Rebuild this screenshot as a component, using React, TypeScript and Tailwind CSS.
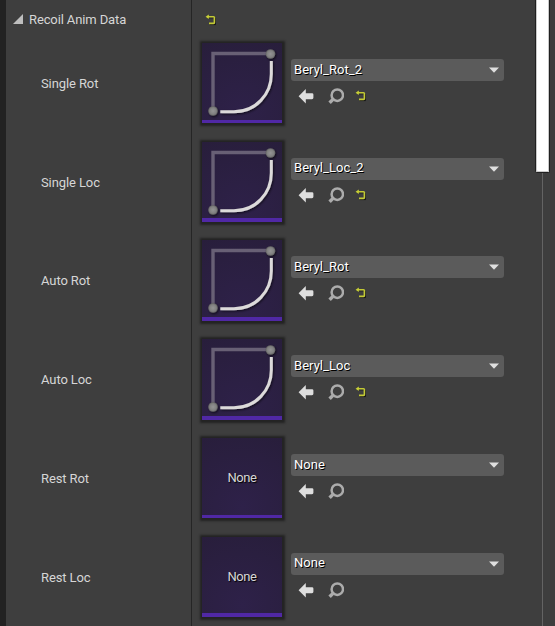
const rows = [
  { label: "Single Rot", value: "Beryl_Rot_2", height: "h-[99px]", tile: "h-20 border-b-[3px]", text: "pb-0", curve: true },
  { label: "Single Loc", value: "Beryl_Loc_2", height: "h-[98px]", tile: "h-20 border-b-4", text: "pb-[2px]", curve: true },
  { label: "Auto Rot", value: "Beryl_Rot", height: "h-[99px]", tile: "h-[81px] border-b-4", text: "pb-0", curve: true },
  { label: "Auto Loc", value: "Beryl_Loc", height: "h-[99px]", tile: "h-[81px] border-b-4", text: "pb-0", curve: true },
  { label: "Rest Rot", value: "None", height: "h-[99px]", tile: "h-20 border-b-[3px]", text: "pb-0", curve: false },
  { label: "Rest Loc", value: "None", height: "h-[99px]", tile: "h-20 border-b-4", text: "pb-[2px]", curve: false },
];

function ResetIcon() {
  return (
    <svg width="12" height="12" viewBox="0 0 12 12" fill="none">
      <path d="M4 3.8H10.8Q11.6 3.8 11.6 4.6V10.6H5.5" stroke="#171717" strokeWidth="1" />
      <path d="M3 2.8H9.6Q10.4 2.8 10.4 3.6V8.6Q10.4 9.4 9.6 9.4H5" stroke="#c3ca35" strokeWidth="1.6" />
      <path d="M1.6 2.8L4.8 .6V5Z" fill="#c9d136" />
    </svg>
  );
}

function ArrowIcon() {
  return (
    <svg width="16" height="16" viewBox="0 0 16 16">
      <path d="M.6 8.2L7.8 1V5.2H14Q15.4 5.2 15.4 6.6V9.8Q15.4 11.2 14 11.2H7.8V15.4Z" fill="#dedede" />
    </svg>
  );
}

function SearchIcon() {
  return (
    <svg width="16" height="16" viewBox="0 0 16 16" fill="none" stroke="#acacac">
      <circle cx="9.3" cy="7.2" r="5.7" strokeWidth="2.5" />
      <path d="M5 11.4L1.6 14.8" strokeWidth="3.4" />
    </svg>
  );
}

function CurveThumb() {
  return (
    <svg width="80" height="80" viewBox="0 0 80 80" fill="none">
      <defs>
        <radialGradient id="knob"><stop offset="0" stopColor="#949494" /><stop offset=".7" stopColor="#808080" /><stop offset="1" stopColor="#606060" /></radialGradient>
        <filter id="soft" x="-20%" y="-20%" width="140%" height="140%"><feDropShadow dx="1" dy="1.2" stdDeviation="1.2" floodColor="#000" floodOpacity=".6" /></filter>
      </defs>
      <path d="M11 64V10.5H65" stroke="#686075" strokeWidth="3.4" />
      <g filter="url(#soft)">
        <path d="M18.3 68.8H32C54 68.8 69.3 51 69.3 31V18" stroke="#dcdada" strokeWidth="3" />
        <circle cx="68.5" cy="11" r="4.8" fill="url(#knob)" />
        <circle cx="11" cy="68" r="4.8" fill="url(#knob)" />
      </g>
    </svg>
  );
}

export default function App() {
  return (
    <div className="flex h-[626px] w-[555px] overflow-hidden bg-[#3e3e3e] font-[Roboto,sans-serif] text-[13px] text-[#d6d6d6]">
      <div className="w-1.5 shrink-0 bg-[#222222]" />
      <main className="flex w-[529px] shrink-0 flex-col">
        <div className="flex h-[34px] shrink-0">
          <div className="flex w-[185px] items-center pl-[6px] pt-1.5">
            <svg width="12" height="12" viewBox="0 0 12 12" className="mb-[3px]"><path d="M11 1V11H1Z" fill="#bebebe" /></svg>
            <span className="ml-[5px] tracking-[-0.12px]">Recoil Anim Data</span>
          </div>
          <div className="flex grow items-center border-l border-[#252525] pl-3 pt-1.5"><ResetIcon /></div>
        </div>
        {rows.map((row) => (
          <section key={row.label} className={`flex shrink-0 ${row.height}`}>
            <div className="w-[185px] pl-[35px] pt-[40px] leading-5 tracking-[-0.1px]">{row.label}</div>
            <div className="flex grow items-start border-l border-[#252525] pl-[10px] pt-[9px]">
              <div className={`flex w-20 shrink-0 items-center justify-center border-[#5028a5] bg-[radial-gradient(circle_at_50%_90%,#2e2149,#281e3b)] shadow-[0.5px_0.5px_2px_2.5px_#232323] ${row.tile}`}>
                {row.curve ? <div className="h-[77px]"><CurveThumb /></div> : <span className="pt-[3px] tracking-[-0.4px] [text-shadow:1px_1px_1px_#000]">None</span>}
              </div>
              <div className="ml-[9px] mt-4 w-[213px]">
                <div className="flex h-[22px] items-center justify-between rounded-[3px] bg-[#5b5b5b] pl-[3px] pr-1 tracking-[0.05px] text-white [text-shadow:1px_1px_0_#000]">
                  <span className={row.text}>{row.value}</span>
                  <svg width="12" height="8" viewBox="0 0 12 8"><path d="M1 1.5H11L6 6.8Z" fill="#dfdfdf" /></svg>
                </div>
                <div className="mt-[7px] flex items-center pl-[7px]">
                  <ArrowIcon />
                  <div className="ml-[14px]"><SearchIcon /></div>
                  {row.curve && <div className="ml-[10px]"><ResetIcon /></div>}
                </div>
              </div>
            </div>
          </section>
        ))}
      </main>
      <div className="flex w-[15px] shrink-0 flex-col items-center">
        <div className="h-[173px] w-[15px] shrink-0 rounded-b-[2px] border-x border-b border-[#202020] bg-white shadow-[inset_1px_-1px_0_#c9c9c9,inset_-1px_0_0_#c9c9c9]" />
        <div className="w-px grow bg-[#646464]" />
      </div>
    </div>
  );
}
